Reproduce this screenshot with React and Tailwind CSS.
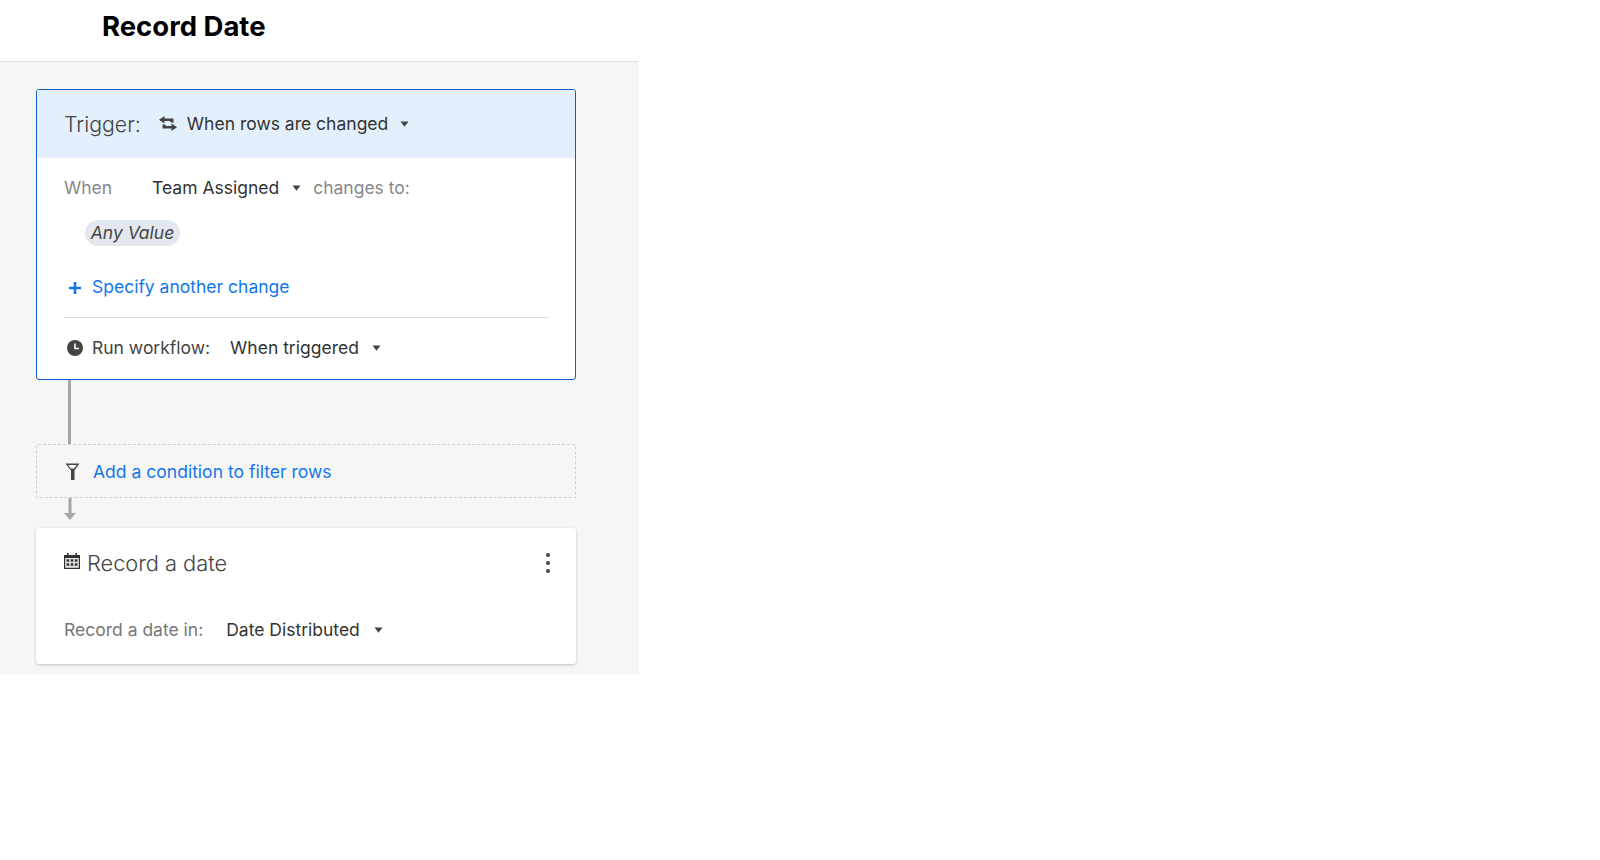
const Caret = ({ className = "" }) => (
  <svg width="9" height="6" viewBox="0 0 9 6" className={className}>
    <path d="M0.500 0.500h8L4.500 5.800z" fill="#444" />
  </svg>
);

const SwapIcon = () => (
  <svg width="18" height="15" viewBox="0 0 18 15" fill="none">
    <path d="M5.500 0L0 3.700l5.500 3.800V5h5.300l1.200 1.500h2.500V2.500H5.500z" fill="#444" />
    <path d="M12.500 15L18 11.300l-5.500-3.800V10H7.200L6 8.500H3.500v4h9z" fill="#444" />
  </svg>
);

const ClockIcon = () => (
  <svg width="16" height="16" viewBox="0 0 16 16">
    <circle cx="8" cy="8" r="8" fill="#444" />
    <path d="M8 3.500v5h4" fill="none" stroke="#fff" strokeWidth="1.6" />
  </svg>
);

const FilterIcon = () => (
  <svg width="15" height="17" viewBox="0 0 15 17" fill="none">
    <path d="M0.500 0.500h14L9.500 7.500V17H6V7.500z" fill="#444" />
    <path d="M3.200 2h8.600L9.200 5.500H5.800z" fill="#f7f6f5" />
  </svg>
);

const CalendarIcon = () => (
  <svg width="16" height="16" viewBox="0 0 16 16">
    <path d="M0 2h16v14H0z" fill="#333" />
    <path d="M3 0h1.600v3H3zM11.400 0H13v3h-1.600z" fill="#333" />
    <path d="M1.200 5h13.600v9.800H1.200z" fill="#e4e4e4" />
    <path d="M2.600 6.200h2.600v2.600H2.600zM6.700 6.200h2.600v2.600H6.700zM10.800 6.200h2.600v2.600h-2.600zM2.600 10.200h2.600v2.600H2.600zM6.700 10.200h2.600v2.600H6.700zM10.800 10.200h2.600v2.600h-2.600z" fill="#333" />
  </svg>
);

const TriggerCard = () => (
  <div className="w-[540px] border border-[#0f5fd0] rounded-[3px] bg-white overflow-hidden">
    <div className="h-[68px] bg-[#e3f0fc] flex items-center pl-[27px]">
      <span className="mt-[2px] text-[21.300px] font-light text-[#444]">Trigger:</span>
      <span className="ml-[18px] -mt-[1px]"><SwapIcon /></span>
      <span className="ml-[10px] text-[17.500px] text-[#333]">When rows are changed</span>
      <Caret className="ml-[12px]" />
    </div>
    <div className="px-[27px]">
      <div className="flex items-center h-[26px] mt-[17px] text-[17.500px]">
        <span className="w-[88px] text-[#888]">When</span>
        <span className="text-[#333]">Team Assigned</span>
        <Caret className="ml-[13px]" />
        <span className="ml-[12px] text-[#888]">changes to:</span>
      </div>
      <div className="mt-[19px] ml-[21px] w-[95px] h-[26px] rounded-full bg-[#e3e8ee] flex items-center justify-center text-[17.500px] italic text-[#444]">
        Any Value
      </div>
      <div className="flex items-center h-[26px] mt-[28px] text-[17.500px] text-[#1277ee]">
        <svg width="12" height="12" viewBox="0 0 12 12" className="ml-[5px] mt-[1px]">
          <path d="M4.700 0h2.600v4.700H12v2.600H7.300V12H4.700V7.300H0V4.700h4.700z" fill="#1277ee" />
        </svg>
        <span className="ml-[11px]">Specify another change</span>
      </div>
      <div className="mt-[17px] border-t border-[#d9d9d9]" />
      <div className="flex items-center h-[26px] mt-[17px] mb-[18px] text-[17.500px]">
        <span className="ml-[3px]"><ClockIcon /></span>
        <span className="ml-[9px] text-[#444]">Run workflow:</span>
        <span className="ml-[20px] text-[#333]">When triggered</span>
        <Caret className="ml-[13px]" />
      </div>
    </div>
  </div>
);

const ActionCard = () => (
  <div className="w-[540px] h-[136px] bg-white rounded-[3px] shadow-[0_1px_3px_rgba(0,0,0,0.22)] px-[28px]">
    <div className="flex items-center h-[26px] pt-[22px] box-content">
      <span className="-mt-[4px]"><CalendarIcon /></span>
      <span className="ml-[7px] text-[21.800px] font-light text-[#444]">Record a date</span>
      <div className="ml-auto mr-[-2px] flex flex-col gap-[4px]">
        <span className="w-[4px] h-[4px] rounded-full bg-[#444]" />
        <span className="w-[4px] h-[4px] rounded-full bg-[#444]" />
        <span className="w-[4px] h-[4px] rounded-full bg-[#444]" />
      </div>
    </div>
    <div className="flex items-center h-[26px] mt-[41px] text-[17.500px]">
      <span className="text-[#777]">Record a date in:</span>
      <span className="ml-[23px] text-[#333]">Date Distributed</span>
      <Caret className="ml-[14px]" />
    </div>
  </div>
);

export default function App() {
  return (
    <div className="w-[639px] font-['Inter',sans-serif]">
      <div className="h-[62px] bg-white border-b border-[#e2e2e2] pl-[102px] flex items-center">
        <h1 className="-mt-[7px] text-[27.500px] font-bold text-black">Record Date</h1>
      </div>
      <div className="h-[613px] bg-[#f7f6f5] pt-[27px] pl-[36px]">
        <TriggerCard />
        <div className="ml-[32px] w-[3px] h-[64px] bg-[#a6a6a6]" />
        <div className="w-[540px] h-[54px] border border-dashed border-[#cfcfcf] rounded-[2px] flex items-center pl-[28px]">
          <FilterIcon />
          <span className="ml-[13px] mt-[2px] text-[17.550px] text-[#1277ee]">Add a condition to filter rows</span>
        </div>
        <svg width="12" height="23" viewBox="0 0 12 23" className="ml-[28px] mb-[7px]">
          <path d="M4.500 0h3v15H12l-6 7-6-7h4.500z" fill="#a6a6a6" />
        </svg>
        <ActionCard />
      </div>
    </div>
  );
}
